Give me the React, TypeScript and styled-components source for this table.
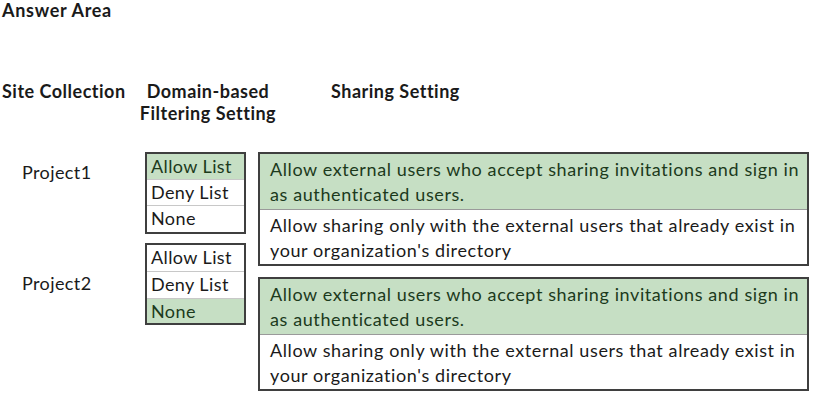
import React from "react";
import styled, { createGlobalStyle } from "styled-components";

const Global = createGlobalStyle`
  html, body { margin: 0; padding: 0; background: #ffffff; }
  body { font-family: Lato, "Open Sans", sans-serif; color: #1a1a1a; letter-spacing: 0.4px; }
`;

const Page = styled.div`
  width: 813px;
  height: 393px;
  overflow: hidden;
`;

const Title = styled.div`
  font-weight: 700;
  font-size: 18px;
  line-height: 20px;
  letter-spacing: 0.7px;
  padding-left: 2px;
`;

const Headers = styled.div`
  display: grid;
  grid-template-columns: 133px 150px 300px;
  margin-top: 60px;
  font-weight: 700;
  font-size: 18px;
  line-height: 22px;
  letter-spacing: 0.5px;
`;

const Head = styled.div<{ $pad?: number; $center?: boolean }>`
  padding-left: ${(p) => p.$pad ?? 0}px;
  text-align: ${(p) => (p.$center ? "center" : "left")};
  white-space: nowrap;
`;

const Body = styled.div`
  display: grid;
  grid-template-columns: 145px 113px 551px;
  margin-top: 28px;
`;

const Labels = styled.div`
  display: flex;
  flex-direction: column;
  padding-left: 22px;
  font-size: 18px;
  line-height: 20px;
`;

const Label = styled.div<{ $top: number }>`
  margin-top: ${(p) => p.$top}px;
`;

const Stack = styled.div<{ $gap: number; $w?: number }>`
  display: flex;
  flex-direction: column;
  gap: ${(p) => p.$gap}px;
  width: ${(p) => (p.$w ? `${p.$w}px` : "auto")};
`;

const Box = styled.div`
  border: 2px solid #3f3f3f;
  display: flex;
  flex-direction: column;
  background: #fff;
`;

const Opt = styled.div<{ $on?: boolean; $h?: number }>`
  background: ${(p) => (p.$on ? "#c6dfc4" : "#ffffff")};
  color: ${(p) => (p.$on ? "#1c3a1c" : "#1a1a1a")};
  font-size: 18px;
  height: ${(p) => p.$h ?? 26}px;
  line-height: 24px;
  padding-left: 4px;
  box-sizing: border-box;
  white-space: nowrap;
  & + & {
    border-top: 1px solid #c8c8c8;
  }
`;

const Share = styled.div<{ $on?: boolean }>`
  background: ${(p) => (p.$on ? "#c6dfc4" : "#ffffff")};
  color: ${(p) => (p.$on ? "#1c3a1c" : "#1a1a1a")};
  font-size: 18px;
  letter-spacing: 0.6px;
  line-height: 25px;
  padding: 3px 4px 2px 10px;
  height: 55px;
  box-sizing: border-box;
  white-space: nowrap;
  & + & {
    border-top: 1px solid #9a9a9a;
  }
`;

const ShareA = () => (
  <>
    Allow external users who accept sharing invitations and sign in
    <br />
    as authenticated users.
  </>
);

const ShareB = () => (
  <>
    Allow sharing only with the external users that already exist in
    <br />
    your organization's directory
  </>
);

export default function App() {
  return (
    <Page>
      <Global />
      <Title>Answer Area</Title>
      <Headers>
        <Head $pad={2}>Site Collection</Head>
        <Head $center>
          Domain-based
          <br />
          Filtering Setting
        </Head>
        <Head $pad={48}>Sharing Setting</Head>
      </Headers>
      <Body>
        <Labels>
          <Label $top={10}>Project1</Label>
          <Label $top={91}>Project2</Label>
        </Labels>
        <Stack $gap={9} $w={101}>
          <Box>
            <Opt $on $h={25}>Allow List</Opt>
            <Opt>Deny List</Opt>
            <Opt $h={27}>None</Opt>
          </Box>
          <Box>
            <Opt>Allow List</Opt>
            <Opt $h={27}>Deny List</Opt>
            <Opt $on $h={25}>None</Opt>
          </Box>
        </Stack>
        <Stack $gap={11}>
          <Box>
            <Share $on>
              <ShareA />
            </Share>
            <Share>
              <ShareB />
            </Share>
          </Box>
          <Box>
            <Share $on>
              <ShareA />
            </Share>
            <Share>
              <ShareB />
            </Share>
          </Box>
        </Stack>
      </Body>
    </Page>
  );
}
